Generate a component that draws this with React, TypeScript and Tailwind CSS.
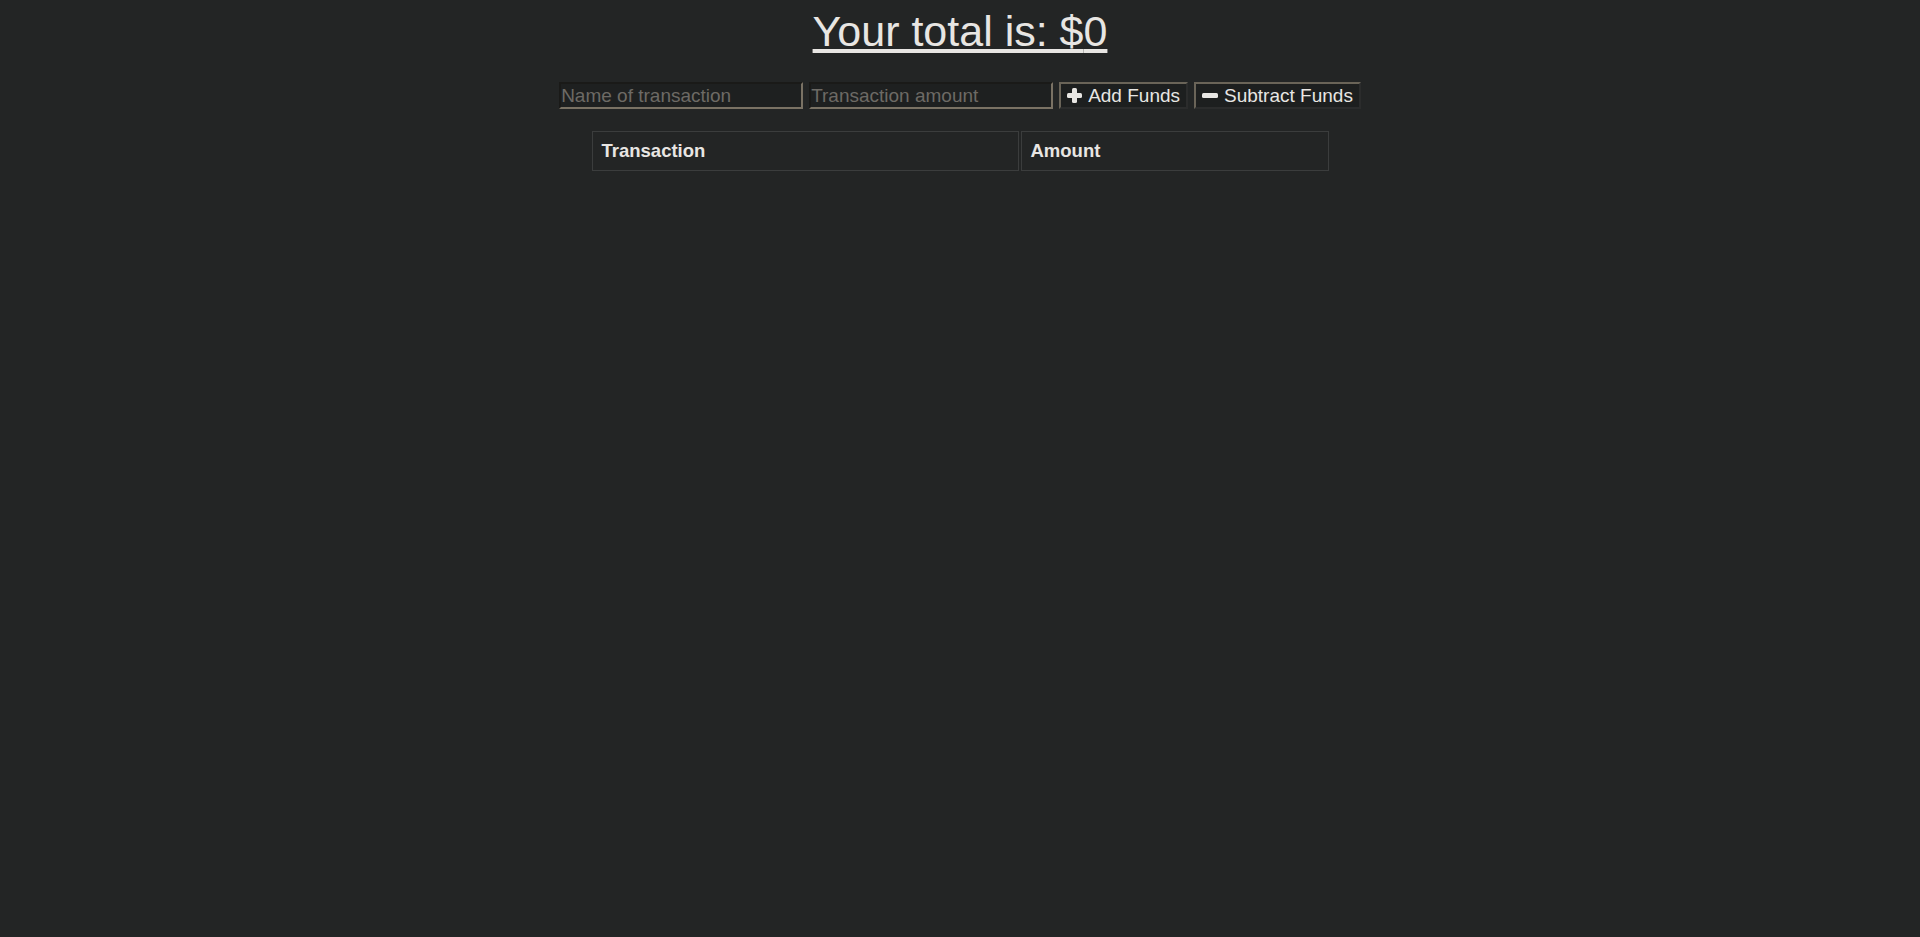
import React, { useState } from 'react';

const PlusIcon = () => (
  <svg width="15" height="15" viewBox="0 0 15 15" className="shrink-0">
    <rect x="5" y="0" width="5" height="15" rx="1.5" fill="#e8e6e3" />
    <rect x="0" y="5" width="15" height="5" rx="1.5" fill="#e8e6e3" />
  </svg>
);

const MinusIcon = () => (
  <svg width="16" height="15" viewBox="0 0 16 15" className="shrink-0">
    <rect x="0" y="5" width="16" height="5" rx="1.5" fill="#e8e6e3" />
  </svg>
);

const App: React.FC = () => {
  const [name, setName] = useState('');
  const [amount, setAmount] = useState('');
  const [total, setTotal] = useState(0);
  const [rows, setRows] = useState<{ name: string; value: number }[]>([]);

  const addRow = (sign: number) => {
    const value = parseFloat(amount);
    if (!name || isNaN(value)) return;
    setRows((prev) => [{ name, value: sign * value }, ...prev]);
    setTotal((t) => t + sign * value);
    setName('');
    setAmount('');
  };

  const inputClass =
    'w-[244px] h-[27px] box-border bg-[#1e2020] text-[#e8e6e3] text-[19px] leading-[21px] px-0 py-0 border-2 border-t-[#1a1a18] border-l-[#1a1a18] border-b-[#7a7264] border-r-[#7a7264] outline-none placeholder:text-[#6d6a65]';

  const buttonClass =
    'h-[27px] box-border flex items-center gap-[6px] px-[6px] bg-[#1d1f1f] text-[#e8e6e3] text-[19px] leading-[21px] border-2 border-t-[#6a6458] border-l-[#6a6458] border-b-[#2b2c2c] border-r-[#2b2c2c]';

  const cellClass = 'border border-[#3b3d3d] pl-[9px] py-[8px] text-[18.5px] leading-[22px]';

  return (
    <div className="min-h-[937px] w-full bg-[#232525] text-[#e8e6e3] pt-[7px] font-['Liberation_Sans',Arial,sans-serif]">
      <h1 className="text-center text-[43px] leading-[49px] font-normal underline">
        Your total is: ${total}
      </h1>

      <div className="mt-[26px] flex justify-center gap-[6px]">
        <input
          type="text"
          value={name}
          onChange={(e) => setName(e.target.value)}
          placeholder="Name of transaction"
          className={inputClass}
        />
        <input
          type="number"
          value={amount}
          onChange={(e) => setAmount(e.target.value)}
          placeholder="Transaction amount"
          className={inputClass}
        />
        <button type="button" onClick={() => addRow(1)} className={buttonClass}>
          <PlusIcon />
          Add Funds
        </button>
        <button type="button" onClick={() => addRow(-1)} className={buttonClass}>
          <MinusIcon />
          Subtract Funds
        </button>
      </div>

      <div className="mt-[22px] mx-auto w-[737px] grid grid-cols-[427px_308px] gap-[2px]">
        <div className={`${cellClass} font-bold`}>Transaction</div>
        <div className={`${cellClass} font-bold`}>Amount</div>
        {rows.map((row, i) => (
          <React.Fragment key={i}>
            <div className={cellClass}>{row.name}</div>
            <div className={cellClass}>{row.value}</div>
          </React.Fragment>
        ))}
      </div>
    </div>
  );
};

export default App;
